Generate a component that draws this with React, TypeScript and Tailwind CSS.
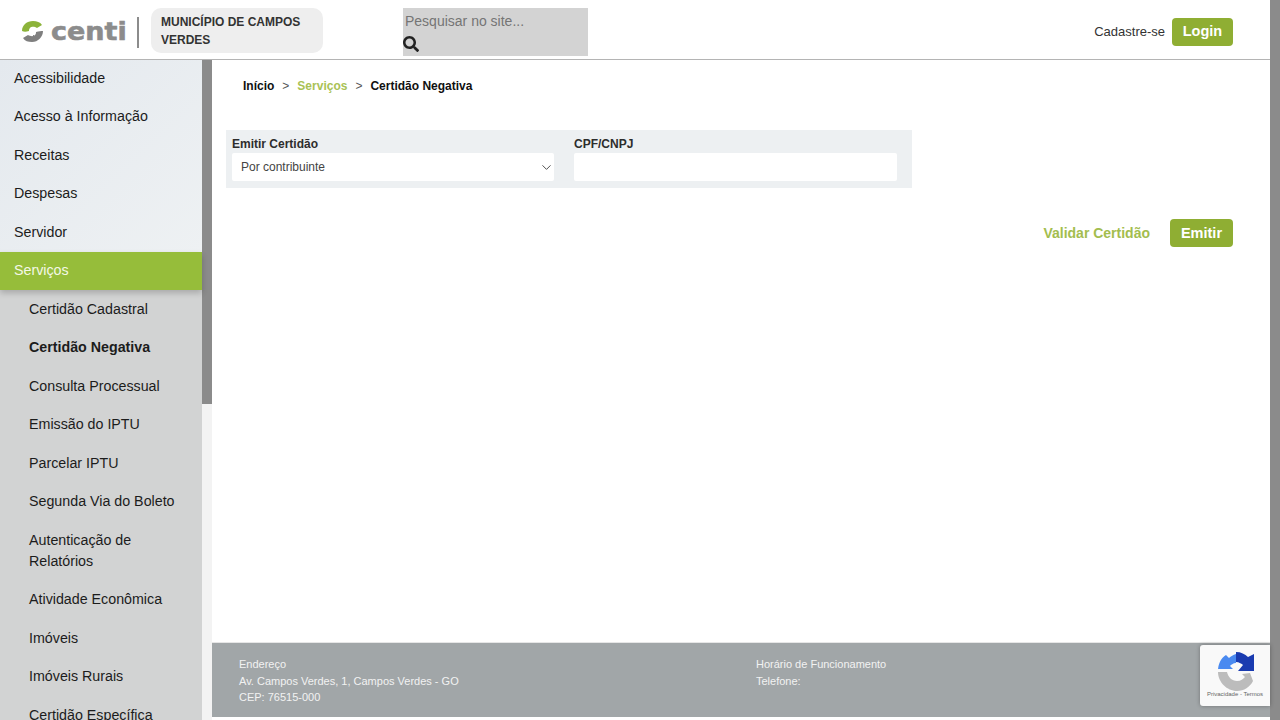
import { ChevronDown } from 'lucide-react'
import { FaSearch } from 'react-icons/fa'

const topMenu = ['Acessibilidade', 'Acesso à Informação', 'Receitas', 'Despesas', 'Servidor']

const subMenu = [
  'Certidão Cadastral',
  'Certidão Negativa',
  'Consulta Processual',
  'Emissão do IPTU',
  'Parcelar IPTU',
  'Segunda Via do Boleto',
  'Autenticação de Relatórios',
  'Atividade Econômica',
  'Imóveis',
  'Imóveis Rurais',
  'Certidão Específica',
]

function Logo() {
  return (
    <div className="flex items-center gap-[8px]">
      <svg width="21" height="23" viewBox="0 0 21 23">
        <path d="M0 11C0 5 5 1 11 1c4 0 7 1 9 4l-5 3c-2-1-5-2-7 0-1 1-1 2-1 3-3 1-5 1-7 0z" fill="#8cb33a" />
        <path d="M21 11c0 6-5 11-11 11-4 0-7-1-9-4l5-3c2 1 5 2 7 0 1-1 1-2 1-3 3-1 5-1 7-1z" fill="#7f7f7f" />
      </svg>
      <span className="origin-left scale-x-[1.08] font-['DejaVu_Sans'] text-[25px] font-bold leading-none text-[#8c8c8c] [-webkit-text-stroke:0.6px_#8c8c8c]">
        centi
      </span>
    </div>
  )
}

function Header() {
  return (
    <header className="flex h-[60px] shrink-0 items-start border-b border-[#b4b4b4] bg-white">
      <div className="ml-[22px] mt-[19px] w-[114px]">
        <Logo />
      </div>
      <div className="ml-[1px] mt-[17px] h-[31px] w-[2px] bg-[#8c8c8c]" />
      <div className="ml-[12px] mt-[8px] h-[45px] w-[172px] rounded-[10px] bg-[#eeeeee] px-[10px] py-[5px] text-[12px] font-bold leading-[18px] text-[#333333]">
        MUNICÍPIO DE CAMPOS VERDES
      </div>
      <div className="ml-[80px] mt-[8px] h-[48px] w-[185px] bg-[#d3d3d3]">
        <div className="pl-[2px] pt-[4px] text-[14px] leading-[18px] text-[#757575]">Pesquisar no site...</div>
        <FaSearch className="mt-[6px] text-[16px] text-[#222222]" />
      </div>
      <div className="ml-auto mr-[37px] mt-[18px] flex items-center gap-[7px]">
        <span className="text-[13px] text-[#333333]">Cadastre-se</span>
        <button className="h-[28px] w-[61px] rounded-[4px] bg-[#8fae33] text-[14.5px] font-bold text-white">Login</button>
      </div>
    </header>
  )
}

function Sidebar() {
  return (
    <aside className="flex w-[212px] shrink-0 overflow-hidden">
      <nav className="w-[202px] shrink-0 bg-[#d2d3d3] text-[14.25px] leading-[21px]">
        <div className="bg-gradient-to-br from-[#e4e9ee] to-[#eef1f3] text-[#1c1c1c]">
          {topMenu.map((item) => (
            <a key={item} className="block px-[14px] py-[8.75px] first:pt-[7.75px]">
              {item}
            </a>
          ))}
        </div>
        <a className="relative block bg-[#96bd3a] px-[14px] py-[8.75px] text-[#f4f8e6] shadow-[0_3px_6px_rgba(0,0,0,0.2)]">
          Serviços
        </a>
        <div className="text-[#1c1c1c]">
          {subMenu.map((item) => (
            <a
              key={item}
              className={`block py-[8.75px] pl-[29px] pr-[14px] ${item === 'Certidão Negativa' ? 'font-bold' : ''}`}
            >
              {item}
            </a>
          ))}
        </div>
      </nav>
      <div className="w-[10px] shrink-0 bg-[#f3f3f3]">
        <div className="h-[344px] bg-[#8b8b8b]" />
      </div>
    </aside>
  )
}

function CertidaoForm() {
  return (
    <div className="ml-[14px] mt-[36px] flex h-[58px] w-[686px] gap-[20px] bg-[#edf0f2] pl-[6px] pt-[7px] text-[12px] font-bold text-[#2d2d2d]">
      <div className="w-[322px]">
        <label className="block leading-[15px]">Emitir Certidão</label>
        <div className="mt-[1px] flex h-[28px] items-center justify-between rounded-[2px] bg-white pl-[9px] font-normal text-[#444444]">
          <span>Por contribuinte</span>
          <ChevronDown size={15} strokeWidth={1.5} />
        </div>
      </div>
      <div className="w-[323px]">
        <label className="block leading-[15px]">CPF/CNPJ</label>
        <input className="mt-[1px] block h-[28px] w-full rounded-[2px] bg-white" />
      </div>
    </div>
  )
}

function Footer() {
  return (
    <footer className="mb-[3px] flex h-[75px] shrink-0 border-t border-[#e6e6e6] bg-[#a1a6a8] pl-[27px] pt-[13px] text-[11px] leading-[16.5px] text-[#f2f2f2]">
      <div className="w-[517px]">
        <p>Endereço</p>
        <p>Av. Campos Verdes, 1, Campos Verdes - GO</p>
        <p>CEP: 76515-000</p>
      </div>
      <div>
        <p>Horário de Funcionamento</p>
        <p>Telefone:</p>
      </div>
    </footer>
  )
}

function Recaptcha() {
  return (
    <div className="absolute bottom-[14px] right-[10px] flex h-[61px] w-[70px] flex-col items-center rounded-l-[3px] bg-[#f9f9f9] pt-[7px] shadow-[0_0_4px_rgba(0,0,0,0.3)]">
      <svg width="38" height="39" viewBox="0 0 38 39" className="ml-[1px]">
        <path d="M1 19C1 12 4 6 9 3l3 3c2-2 4-3 7-4v9c-3 0-5 2-6 3l3 3H1z" fill="#4a8af0" />
        <path d="M19 0c5 0 9 2 12 5l6-3v17H21l5-6c-1-1-4-3-7-3z" fill="#1a3bb0" />
        <path d="M1 20h9c1 5 5 9 10 9 4 0 6-2 8-4l-3-3 8-1 3 8c-3 6-9 10-16 10C10 39 1 30 1 20z" fill="#bcbcbc" />
      </svg>
      <span className="-mt-[1px] whitespace-nowrap text-[6px] leading-[8px] text-[#666666]">Privacidade - Termos</span>
    </div>
  )
}

export default function App() {
  return (
    <div className="relative flex h-[720px] w-[1280px] overflow-hidden bg-white font-['Liberation_Sans',sans-serif]">
      <div className="flex w-[1270px] shrink-0 flex-col">
        <Header />
        <div className="flex min-h-0 flex-1">
          <Sidebar />
          <main className="flex min-w-0 flex-1 flex-col">
            <div className="flex-1">
              <div className="flex gap-[8px] pl-[31px] pt-[19px] text-[12px] font-bold leading-[15px] text-[#111111]">
                <span>Início</span>
                <span className="font-normal text-[#555555]">&gt;</span>
                <span className="text-[#a9c255]">Serviços</span>
                <span className="font-normal text-[#555555]">&gt;</span>
                <span>Certidão Negativa</span>
              </div>
              <CertidaoForm />
              <div className="mr-[37px] mt-[31px] flex items-center justify-end gap-[20px]">
                <a className="pt-px text-[14px] font-bold text-[#a3bd4e]">Validar Certidão</a>
                <button className="h-[28px] w-[63px] rounded-[4px] bg-[#8fae33] pt-px text-[14.5px] font-bold text-white">Emitir</button>
              </div>
            </div>
            <Footer />
          </main>
        </div>
      </div>
      <div className="w-[10px] shrink-0 bg-[#8b8b8b]" />
      <Recaptcha />
    </div>
  )
}
